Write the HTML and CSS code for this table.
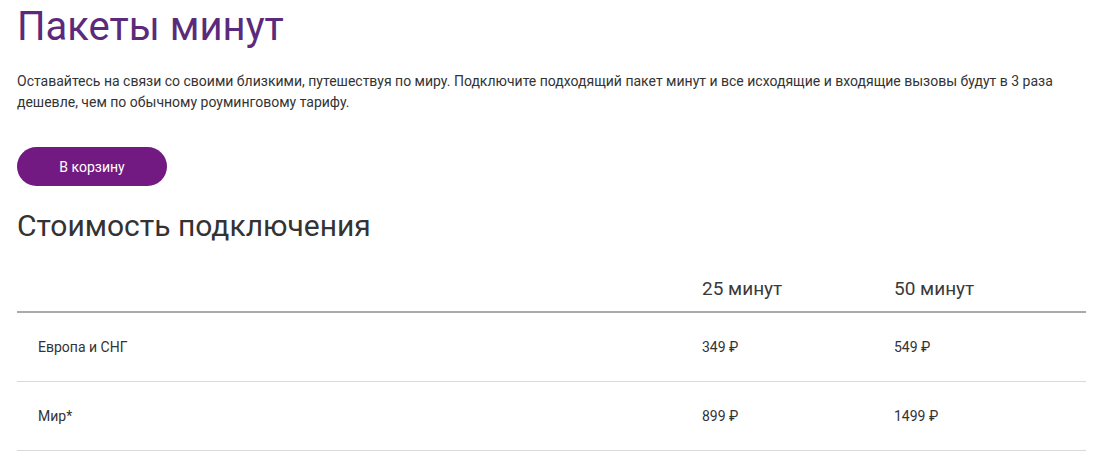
FILE: index.html
```html
<!DOCTYPE html>
<html lang="ru">
<head>
<meta charset="utf-8">
<title>Пакеты минут</title>
<link rel="stylesheet" href="styles.css">
</head>
<body>
<main class="page">
  <h1 class="title">Пакеты минут</h1>
  <p class="lead">Оставайтесь на связи со своими близкими, путешествуя по миру. Подключите подходящий пакет минут и все исходящие и входящие вызовы будут в 3 раза дешевле, чем по обычному роуминговому тарифу.</p>
  <button class="cart-btn" type="button">В корзину</button>
  <h2 class="subtitle">Стоимость подключения</h2>
  <div class="prices">
    <div class="row head">
      <div class="cell name"></div>
      <div class="cell">25 минут</div>
      <div class="cell">50 минут</div>
    </div>
    <div class="row">
      <div class="cell name">Европа и СНГ</div>
      <div class="cell">349 ₽</div>
      <div class="cell">549 ₽</div>
    </div>
    <div class="row">
      <div class="cell name">Мир*</div>
      <div class="cell">899 ₽</div>
      <div class="cell">1499 ₽</div>
    </div>
  </div>
</main>
</body>
</html>
```
FILE: styles.css
```css
html, body {
  margin: 0;
  padding: 0;
  background: #ffffff;
}
body {
  font-family: Roboto, "Liberation Sans", Arial, sans-serif;
  color: #333333;
}
.page {
  width: 1069px;
  padding-left: 17px;
}
.title {
  margin: 0;
  padding-top: 3px;
  font-size: 40px;
  line-height: 48px;
  font-weight: 400;
  color: #5c2a7a;
}
.lead {
  margin: 20px 0 0;
  font-size: 14px;
  line-height: 21px;
  color: #333333;
}
.cart-btn {
  display: block;
  margin-top: 34px;
  width: 150px;
  height: 39px;
  border: none;
  border-radius: 20px;
  background: #731982;
  color: #ffffff;
  font-family: inherit;
  font-size: 14px;
  padding: 0;
}
.subtitle {
  margin: 22px 0 0;
  font-size: 30px;
  line-height: 36px;
  font-weight: 400;
  color: #333333;
}
.prices {
  margin-top: 22px;
}
.row {
  display: grid;
  grid-template-columns: 685px 192px 1fr;
  align-items: center;
  height: 68px;
  border-bottom: 1px solid #d9d9d9;
  font-size: 14px;
}
.row.head {
  height: 45px;
  border-bottom: 2px solid #aaaaaa;
  font-size: 19px;
  color: #3a3a3a;
}
.cell.name {
  padding-left: 21px;
}
```
